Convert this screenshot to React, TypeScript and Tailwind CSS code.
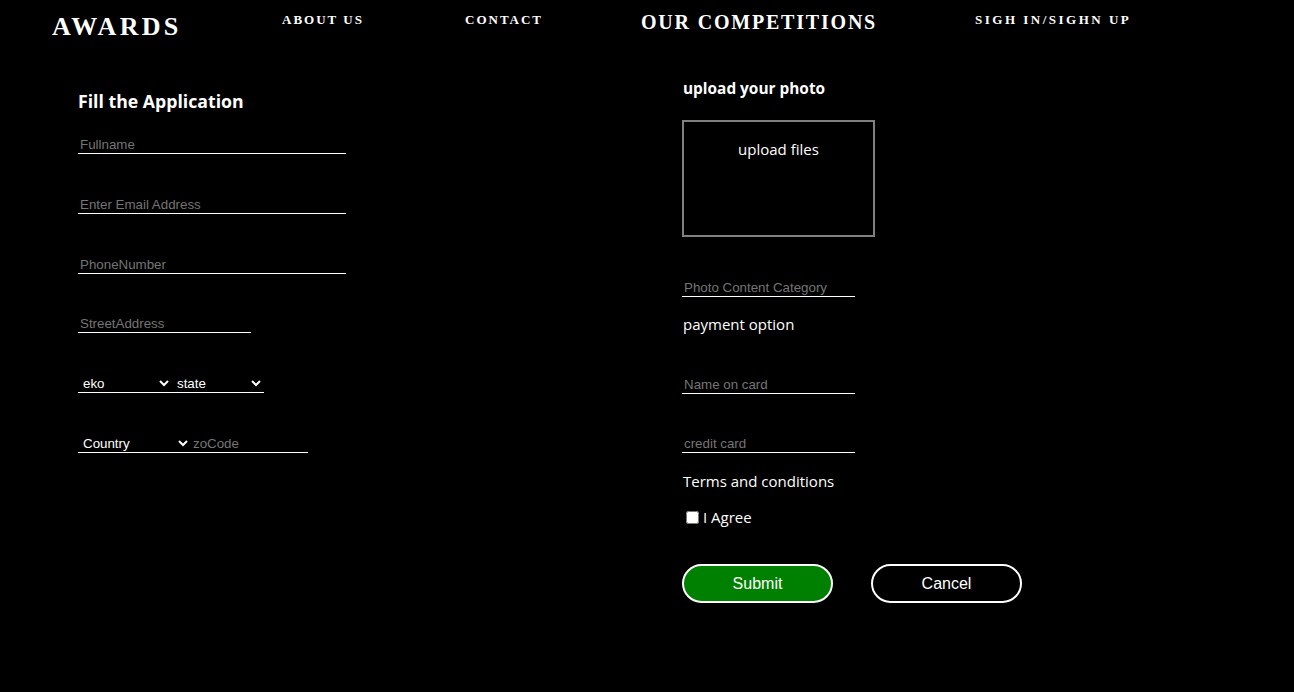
import React from "react";

const serif = "font-['Liberation_Serif','Times_New_Roman',serif]";
const sans = "font-['Open_Sans','Noto_Sans',sans-serif]";
const arial = "font-['Liberation_Sans',Arial,sans-serif]";

const inputCls = `block h-[18px] bg-transparent border-0 border-b border-white px-[2px] py-[1px] text-[13.33px] leading-[15px] text-white placeholder:text-[#757575] outline-none ${arial}`;
const selectCls = `block h-[19px] bg-black border-0 border-b border-white pl-[1px] text-[13.33px] leading-[15px] text-white outline-none ${arial}`;

export default function App() {
  return (
    <div className="min-h-[692px] w-full bg-black text-white">
      <header className={`flex items-start pl-[52px] pt-[10px] h-[50px] font-bold text-white ${serif}`}>
        <div className="w-[230px] mt-[2px] text-[26px] leading-[29px] tracking-[3.3px]">AWARDS</div>
        <div className="w-[183px] mt-[2px] text-[13px] leading-[15px] tracking-[2px]">ABOUT US</div>
        <div className="w-[176px] mt-[2px] text-[13px] leading-[15px] tracking-[2px]">CONTACT</div>
        <div className="w-[334px] mt-[1px] text-[20px] leading-[23px] tracking-[1.8px]">OUR COMPETITIONS</div>
        <div className="mt-[2px] text-[13px] leading-[15px] tracking-[2.5px]">SIGH IN/SIGHN UP</div>
      </header>

      <main className="flex pl-[78px]">
        <section className="w-[604px] flex flex-col">
          <h3 className={`mt-[39px] text-[17.7px] leading-[24px] font-bold ${sans}`}>Fill the Application</h3>
          <input className={`${inputCls} mt-[23px] w-[268px]`} placeholder="Fullname" />
          <input className={`${inputCls} mt-[42px] w-[268px]`} placeholder="Enter Email Address" />
          <input className={`${inputCls} mt-[42px] w-[268px]`} placeholder="PhoneNumber" />
          <input className={`${inputCls} mt-[41px] w-[173px]`} placeholder="StreetAddress" />
          <div className="flex mt-[41px]">
            <select className={`${selectCls} w-[94px]`} defaultValue="eko">
              <option value="eko">eko</option>
            </select>
            <select className={`${selectCls} w-[92px]`} defaultValue="state">
              <option value="state">state</option>
            </select>
          </div>
          <div className="flex mt-[41px]">
            <select className={`${selectCls} w-[113px]`} defaultValue="Country">
              <option value="Country">Country</option>
            </select>
            <input className={`${inputCls} h-[19px] w-[117px]`} placeholder="zoCode" />
          </div>
        </section>

        <section className="flex flex-col">
          <h4 className={`mt-[28px] pl-[1px] text-[15.4px] leading-[22px] font-bold ${sans}`}>upload your photo</h4>
          <div className={`mt-[20px] w-[193px] h-[117px] border-2 border-[#808080] pt-[16px] text-center text-[15px] leading-[22px] ${sans}`}>
            upload files
          </div>
          <input className={`${inputCls} mt-[42px] w-[173px]`} placeholder="Photo Content Category" />
          <p className={`mt-[16px] pl-[1px] text-[15px] leading-[22px] ${sans}`}>payment option</p>
          <input className={`${inputCls} mt-[41px] w-[173px]`} placeholder="Name on card" />
          <input className={`${inputCls} mt-[41px] w-[173px]`} placeholder="credit card" />
          <p className={`mt-[17px] pl-[1px] text-[15px] leading-[22px] ${sans}`}>Terms and conditions</p>
          <label className={`mt-[14px] flex items-center text-[15px] leading-[22px] ${sans}`}>
            <input type="checkbox" className="ml-[4px] mr-[4px] w-[13px] h-[13px]" />
            I Agree
          </label>
          <div className="flex mt-[36px] gap-[38px]">
            <button className={`w-[151px] h-[39px] rounded-full border-2 border-white bg-[#008000] text-white text-[16px] ${arial}`}>Submit</button>
            <button className={`w-[151px] h-[39px] rounded-full border-2 border-white bg-black text-white text-[16px] ${arial}`}>Cancel</button>
          </div>
        </section>
      </main>
    </div>
  );
}
